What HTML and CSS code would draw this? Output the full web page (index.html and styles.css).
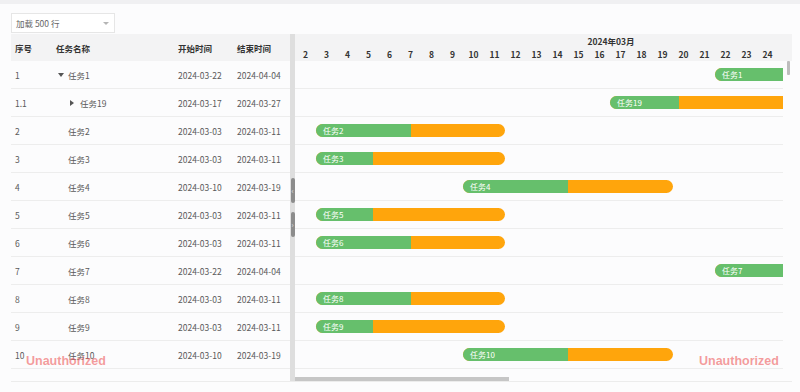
FILE: index.html
```html
<!DOCTYPE html>
<html lang="zh">
<head>
  <meta charset="UTF-8">
  <meta name="viewport" content="width=device-width, initial-scale=1.0">
  <title>Gantt 500 rows</title>
  <link rel="stylesheet" href="styles.css">
</head>
<body>
  <div class="topbar"></div>
  <div class="toolbar">
    <div class="select">
      <span>加载 500 行</span>
      <span class="caret"></span>
    </div>
  </div>

  <div class="board">
    <div class="table">
      <div class="thead">
        <div class="cell">序号</div>
        <div class="cell">任务名称</div>
        <div class="cell">开始时间</div>
        <div class="cell">结束时间</div>
      </div>
      <div class="tbody" id="tbody"></div>
    </div>

    <div class="splitter">
      <div class="handle">&#8249;</div>
      <div class="handle">&#8250;</div>
    </div>

    <div class="gantt">
      <div class="gantt-head">
        <div class="month">2024年03月</div>
        <div class="days" id="days"></div>
      </div>
      <div class="gantt-main">
        <div class="gantt-view" id="rows"></div>
        <div class="vscroll"><div class="vthumb"></div></div>
      </div>
      <div class="hscroll"><div class="hthumb"></div></div>
    </div>

    <div class="watermark wm-left">Unauthorized</div>
    <div class="watermark wm-right">Unauthorized</div>
  </div>

<script>
const dayWidth = 21;
const firstDay = 2; // timeline is scrolled, day 2 is the first visible column

const tasks = [
  { no: '1',   name: '任务1',  level: 0, toggle: 'open',   start: '2024-03-22', end: '2024-04-04', progress: 30 },
  { no: '1.1', name: '任务19', level: 1, toggle: 'closed', start: '2024-03-17', end: '2024-03-27', progress: 30 },
  { no: '2',   name: '任务2',  level: 0, start: '2024-03-03', end: '2024-03-11', progress: 50 },
  { no: '3',   name: '任务3',  level: 0, start: '2024-03-03', end: '2024-03-11', progress: 30 },
  { no: '4',   name: '任务4',  level: 0, start: '2024-03-10', end: '2024-03-19', progress: 50 },
  { no: '5',   name: '任务5',  level: 0, start: '2024-03-03', end: '2024-03-11', progress: 30 },
  { no: '6',   name: '任务6',  level: 0, start: '2024-03-03', end: '2024-03-11', progress: 50 },
  { no: '7',   name: '任务7',  level: 0, start: '2024-03-22', end: '2024-04-04', progress: 30 },
  { no: '8',   name: '任务8',  level: 0, start: '2024-03-03', end: '2024-03-11', progress: 50 },
  { no: '9',   name: '任务9',  level: 0, start: '2024-03-03', end: '2024-03-11', progress: 30 },
  { no: '10',  name: '任务10', level: 0, start: '2024-03-10', end: '2024-03-19', progress: 50 }
];

// day number counted from March 1st (April continues after 31)
function dayOf(date) {
  const parts = date.split('-');
  const month = Number(parts[1]);
  const day = Number(parts[2]);
  return month === 3 ? day : 31 + day;
}

// day header
const days = document.getElementById('days');
for (let d = firstDay; d <= 24; d++) {
  const el = document.createElement('div');
  el.className = 'day';
  el.textContent = d;
  days.appendChild(el);
}

const tbody = document.getElementById('tbody');
const rows = document.getElementById('rows');

tasks.forEach(task => {
  // table row
  const tr = document.createElement('div');
  tr.className = 'trow';
  let toggle = '';
  if (task.toggle === 'open') toggle = '<span class="tri tri-down"></span>';
  if (task.toggle === 'closed') toggle = '<span class="tri tri-right"></span>';
  tr.innerHTML =
    '<div class="cell">' + task.no + '</div>' +
    '<div class="cell name"><span class="indent" style="width:' + (task.level * 12) + 'px"></span>' +
    '<span class="toggle">' + toggle + '</span>' + task.name + '</div>' +
    '<div class="cell">' + task.start + '</div>' +
    '<div class="cell">' + task.end + '</div>';
  tbody.appendChild(tr);

  // gantt row
  const gr = document.createElement('div');
  gr.className = 'grow';
  const startDay = dayOf(task.start);
  const endDay = dayOf(task.end);
  const left = (startDay - firstDay) * dayWidth;
  const width = (endDay - startDay + 1) * dayWidth;
  gr.innerHTML =
    '<div class="bar" style="left:' + left + 'px;width:' + width + 'px">' +
    '<div class="progress" style="width:' + task.progress + '%"></div>' +
    '<span class="label">' + task.name + '</span></div>';
  rows.appendChild(gr);
});
</script>
</body>
</html>
```

FILE: styles.css
```css
body {
  margin: 0;
  background-color: #fcfcfd;
  font-family: "Noto Sans CJK SC", "Noto Sans", sans-serif;
  font-size: 8.5px;
  color: #5a5a5a;
}
.topbar {
  height: 4px;
  background-color: #f0f0f2;
}
.toolbar {
  padding: 9px 11px 0;
  height: 21px;
}
.select {
  width: 104px;
  height: 20px;
  box-sizing: border-box;
  border: 1px solid #e6e6e6;
  background-color: #fff;
  display: flex;
  align-items: center;
  justify-content: space-between;
  padding: 0 5px 0 4px;
  color: #666;
}
.caret {
  width: 0;
  height: 0;
  border-left: 3px solid transparent;
  border-right: 3px solid transparent;
  border-top: 3px solid #b5b5b5;
}

.board {
  position: relative;
  display: flex;
  margin-left: 11px;
  width: 781px;
  height: 348px;
  border-bottom: 1px solid #ececec;
  box-sizing: border-box;
}

/* left table */
.table {
  width: 279px;
}
.thead,
.trow {
  display: grid;
  grid-template-columns: 41px 122px 59px 57px;
  align-items: center;
}
.thead {
  height: 27px;
  background-color: #f3f3f4;
  font-weight: bold;
  color: #333;
}
.trow {
  height: 28px;
  box-sizing: border-box;
  border-bottom: 1px solid #ededed;
}
.cell {
  padding-left: 4px;
  white-space: nowrap;
}
.name {
  display: flex;
  align-items: center;
}
.indent {
  display: inline-block;
}
.toggle {
  display: inline-flex;
  align-items: center;
  justify-content: flex-start;
  width: 12px;
  padding-left: 2px;
  box-sizing: border-box;
}
.tri {
  width: 0;
  height: 0;
}
.tri-down {
  border-left: 3px solid transparent;
  border-right: 3px solid transparent;
  border-top: 4px solid #555;
}
.tri-right {
  border-top: 3px solid transparent;
  border-bottom: 3px solid transparent;
  border-left: 4px solid #555;
}

/* splitter between table and chart */
.splitter {
  width: 5px;
  background-color: #dedede;
  display: flex;
  flex-direction: column;
  align-items: center;
  padding-top: 144px;
  gap: 9px;
  box-sizing: border-box;
  height: 347px;
}
.handle {
  width: 4px;
  height: 25px;
  border-radius: 2px;
  background-color: #8c8c8c;
  color: #e8e8e8;
  font-size: 7px;
  line-height: 25px;
  text-align: center;
  overflow: hidden;
}

/* gantt */
.gantt {
  width: 497px;
  display: flex;
  flex-direction: column;
  overflow: hidden;
}
.gantt-head {
  height: 27px;
  background-color: #f3f3f4;
  font-weight: bold;
  color: #333;
  overflow: hidden;
}
.month {
  width: 632px;
  height: 13px;
  line-height: 14px;
  text-align: center;
}
.days {
  display: flex;
  height: 14px;
  line-height: 14px;
}
.day {
  flex: none;
  width: 21px;
  text-align: center;
}
.gantt-main {
  display: flex;
  height: 308px;
}
.gantt-view {
  width: 488px;
  overflow: hidden;
}
.vscroll {
  width: 9px;
}
.vthumb {
  width: 3px;
  height: 14px;
  margin-left: 4px;
  background-color: #bdbdbd;
  border-radius: 1px;
}
.grow {
  position: relative;
  height: 28px;
  box-sizing: border-box;
  border-bottom: 1px solid #ededed;
}
.bar {
  position: absolute;
  top: 7px;
  height: 13px;
  border-radius: 7px;
  overflow: hidden;
  background-color: #ffa50c;
}
.progress {
  height: 100%;
  background-color: #66bf6c;
}
.label {
  position: absolute;
  left: 7px;
  top: 0;
  line-height: 13px;
  font-size: 8px;
  color: #fff;
  white-space: nowrap;
}
.hscroll {
  height: 4px;
  margin-top: 8px;
}
.hthumb {
  width: 214px;
  height: 4px;
  background-color: #c6c6c6;
}

.watermark {
  position: absolute;
  top: 320px;
  font-family: "Liberation Sans", Arial, sans-serif;
  font-weight: bold;
  font-size: 12.5px;
  color: rgba(238, 90, 90, 0.6);
}
.wm-left {
  left: 15px;
}
.wm-right {
  left: 688px;
}
```
